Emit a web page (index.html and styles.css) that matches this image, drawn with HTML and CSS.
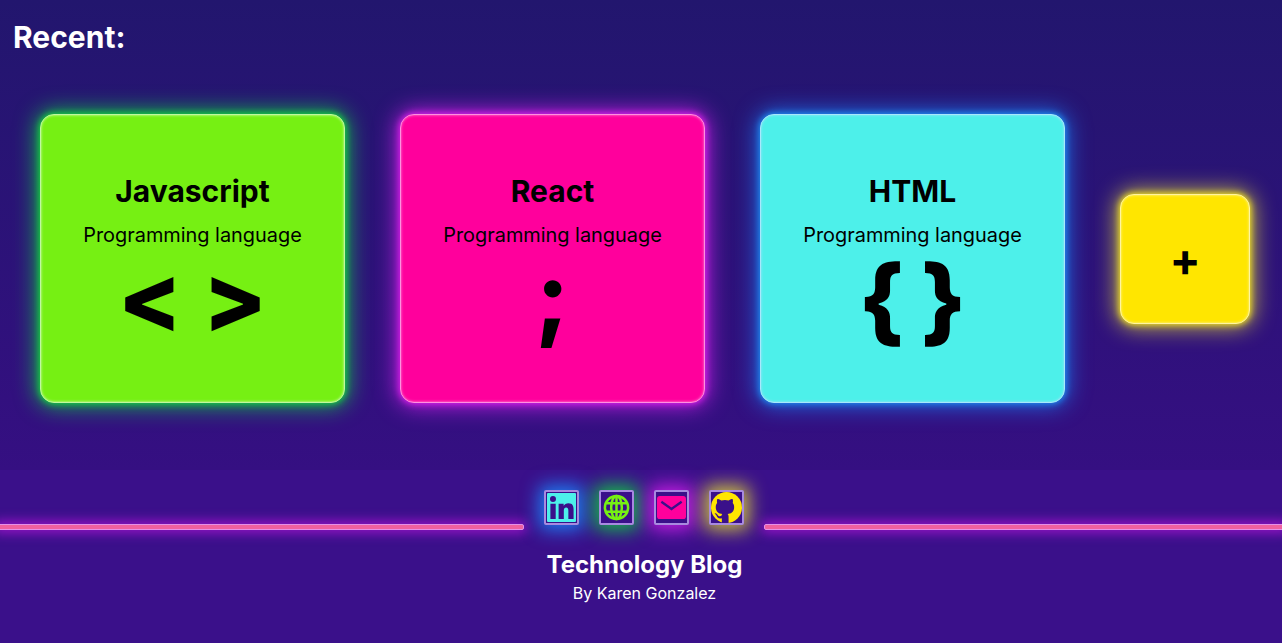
FILE: index.html
```html
<!DOCTYPE html>
<html lang="en">
<head>
    <meta charset="UTF-8">
    <title>Technology Blog</title>
    <link rel="stylesheet" href="styles.css">
</head>
<body>
    <main class="recent">
        <h2>Recent:</h2>
        <div class="cards">
            <div class="card card-green">
                <h3>Javascript</h3>
                <p>Programming language</p>
                <div class="symbol">&lt; &gt;</div>
            </div>
            <div class="card card-pink">
                <h3>React</h3>
                <p>Programming language</p>
                <div class="symbol symbol-semi">;</div>
            </div>
            <div class="card card-cyan">
                <h3>HTML</h3>
                <p>Programming language</p>
                <div class="symbol symbol-braces">{ }</div>
            </div>
            <div class="card-more">+</div>
        </div>
    </main>
    <footer class="footer">
        <div class="footer-top">
            <div class="neon-line neon-line-left"></div>
            <div class="socials">
                <a class="social social-cyan">
                    <svg viewBox="0 0 30 30"><rect width="30" height="30" rx="1" fill="#4df0ea"/><path fill="#3a108a" d="M3.500 11h5.500v16H3.500zM6.200 3a3.100 3.100 0 1 1 0 6.200 3.100 3.100 0 0 1 0-6.200zM12 11h5.200v2.300c.8-1.500 2.600-2.800 5-2.800 4.500 0 5.300 3 5.300 6.900V27h-5.400v-8.500c0-1.900-.4-3.500-2.300-3.500s-2.400 1.600-2.400 3.500V27H12z"/></svg>
                </a>
                <a class="social social-green">
                    <svg viewBox="0 0 30 30" fill="none" stroke="#76f013" stroke-width="2.600"><circle cx="15" cy="15" r="12"/><ellipse cx="15" cy="15" rx="5.500" ry="12"/><path d="M15 3v24M4 10.500h22M4 19.500h22"/></svg>
                </a>
                <a class="social social-pink">
                    <svg viewBox="0 0 30 30"><rect y="3" width="30" height="24" rx="3" fill="#ff009c"/><path d="M4.500 9L15 16.500 25.500 9" fill="none" stroke="#3a108a" stroke-width="2.400"/></svg>
                </a>
                <a class="social social-yellow">
                    <svg viewBox="0 0 30 30"><circle cx="15" cy="15" r="15" fill="#ffe600"/><path fill="#3a108a" d="M10.500 30v-4.500c-3.600.8-4.600-1.300-5-2.300-.3-.7-.8-1.300-1.300-1.700-.5-.3-1.100-.8 0-.9 1 0 1.800 1 2.100 1.400 1.200 2 3 1.400 3.800 1.100.1-.9.500-1.500.8-1.800-3.200-.4-6.300-1.600-6.300-6.900 0-1.500.5-2.800 1.400-3.800-.1-.4-.6-1.800.1-3.800 0 0 1.200-.4 3.900 1.500a13 13 0 0 1 7 0c2.700-1.900 3.900-1.500 3.900-1.500.7 2 .2 3.400.1 3.800.9 1 1.400 2.300 1.400 3.800 0 5.300-3.100 6.500-6.300 6.900.5.400.9 1.300.9 2.600V30z"/></svg>
                </a>
            </div>
            <div class="neon-line"></div>
        </div>
        <h4>Technology Blog</h4>
        <p>By Karen Gonzalez</p>
    </footer>
</body>
</html>
```

FILE: styles.css
```css
html, body {
    height: 100%;
}
body {
    margin: 0;
    font-family: 'Inter', sans-serif;
    color: #fff;
    background: #3a108a;
    overflow: hidden;
}
.recent {
    height: 470px;
    background: linear-gradient(180deg, #22166e 0%, #350f82 100%);
}
h2 {
    margin: 0;
    padding: 20px 0 0 13px;
    font-size: 30px;
    line-height: 35px;
    font-weight: 700;
}
.cards {
    display: flex;
    align-items: center;
    gap: 55px;
    padding: 59px 0 0 40px;
}
.card {
    box-sizing: border-box;
    width: 305px;
    height: 289px;
    border-radius: 14px;
    color: #000;
    text-align: center;
    padding-top: 54px;
}
.card h3 {
    margin: 0;
    font-size: 30px;
    line-height: 44px;
    font-weight: 700;
}
.card p {
    margin: 10px 0 0;
    font-size: 19.9px;
    line-height: 24px;
}
.symbol {
    margin-top: 3px;
    font-size: 94px;
    line-height: 96px;
    font-weight: 800;
}
.symbol-semi {
    margin-top: 0;
}
.symbol-braces {
    margin-top: 5px;
    word-spacing: -4px;
}
.card-green {
    background: #76f013;
    border: 1px solid #c0f8a0;
    box-shadow: inset 0 0 3px #d8ffc0, 0 0 6px 1px #14d040, 0 0 22px 3px #14b848;
}
.card-pink {
    background: #ff009c;
    border: 1px solid #ff90e0;
    box-shadow: inset 0 0 3px #ff90e0, 0 0 6px 1px #d81ee8, 0 0 22px 3px #c01ee0;
}
.card-cyan {
    background: #4df0ea;
    border: 1px solid #a8e8fc;
    box-shadow: inset 0 0 3px #a8e0fc, 0 0 6px 1px #1e8bf0, 0 0 22px 3px #1e6be0;
}
.card-more {
    box-sizing: border-box;
    width: 130px;
    height: 130px;
    border-radius: 14px;
    background: #ffe600;
    border: 1px solid #fff4a0;
    box-shadow: inset 0 0 3px #fff4a0, 0 0 6px 1px #f0e020, 0 0 22px 3px #c8bc40;
    color: #000;
    font-size: 46px;
    font-weight: 700;
    display: flex;
    align-items: center;
    justify-content: center;
}
.footer {
    text-align: center;
}
.footer-top {
    display: flex;
    align-items: flex-end;
    gap: 20px;
    margin: 0 -4px;
}
.neon-line {
    flex: 1 1 0;
    height: 6px;
    box-sizing: border-box;
    margin-bottom: -5px;
    background: #f0609f;
    border: 1px solid #e590e8;
    border-radius: 2px;
    box-shadow: 0 0 12px 3px #9a14c8;
}
.neon-line-left {
    flex-basis: 7px;
}
.socials {
    display: flex;
    gap: 20px;
    padding-top: 20px;
}
.social {
    box-sizing: border-box;
    width: 35px;
    height: 35px;
    padding: 1px;
    display: block;
    background: #3a108a;
    border: 2px solid #a88ae0;
    border-radius: 2px;
}
.social svg {
    display: block;
    width: 100%;
    height: 100%;
}
.social-cyan {
    box-shadow: 0 0 18px 5px #1e7bf0;
}
.social-green {
    box-shadow: 0 0 18px 5px #14b848;
}
.social-pink {
    box-shadow: 0 0 18px 5px #c01ee0;
}
.social-yellow {
    padding: 0;
    box-shadow: 0 0 18px 5px #c8bc40;
}
.footer h4 {
    margin: 25px 0 0 7px;
    font-size: 24px;
    line-height: 30px;
    font-weight: 700;
}
.footer p {
    margin: 3px 0 0 7px;
    font-size: 16px;
    line-height: 20px;
}
```
